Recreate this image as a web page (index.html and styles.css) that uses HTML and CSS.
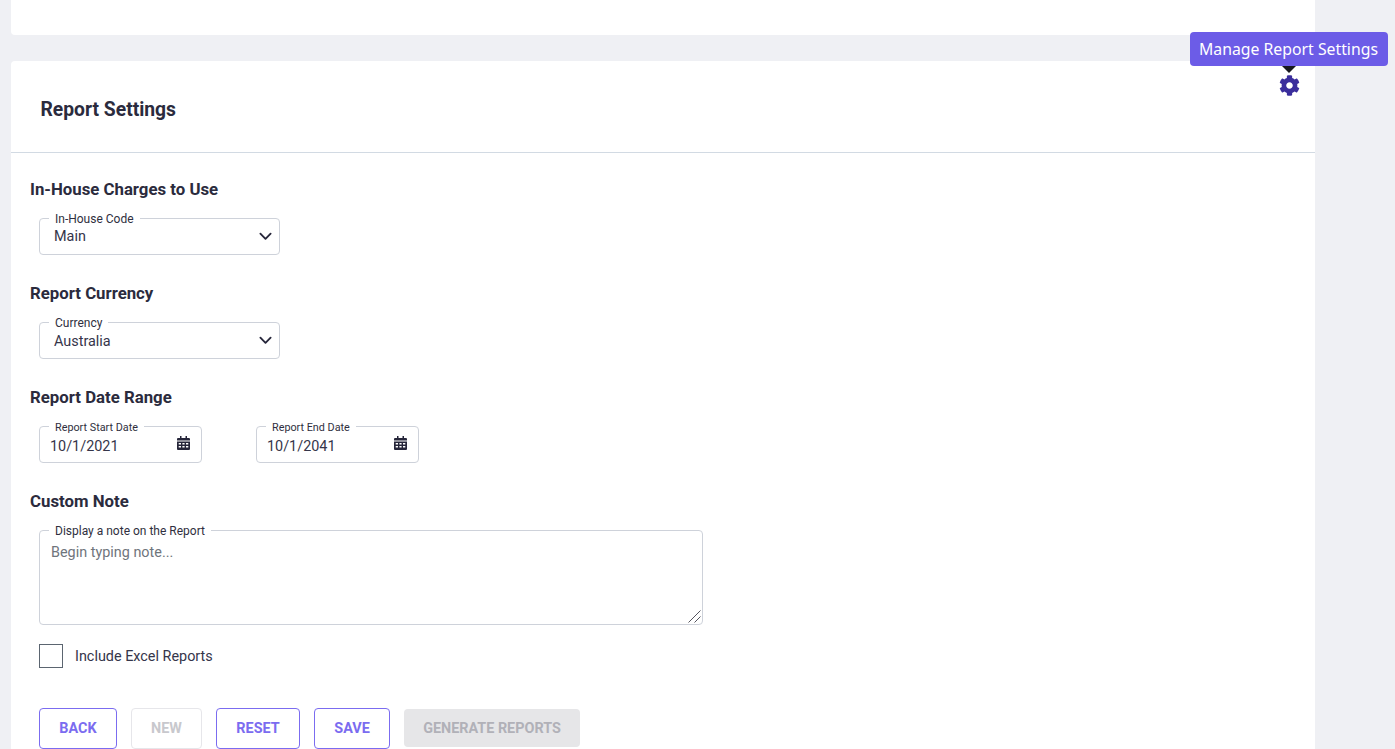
FILE: index.html
```html
<!DOCTYPE html>
<html lang="en">
<head>
<meta charset="utf-8">
<title>Report Settings</title>
<link rel="stylesheet" href="styles.css">
</head>
<body>
<main class="page">
  <div class="top-card"></div>
  <section class="card">
    <header class="card-header">
      <h1 class="title">Report Settings</h1>
      <div class="gear-wrap">
        <svg class="gear" viewBox="0 0 512 512" aria-hidden="true"><path fill="currentColor" d="M487.4 315.7l-42.6-24.6c4.3-23.2 4.3-47 0-70.2l42.6-24.6c4.9-2.8 7.1-8.6 5.5-14-11.1-35.6-30-67.8-54.7-94.6-3.8-4.1-10-5.1-14.8-2.3L380.8 110c-17.9-15.4-38.5-27.3-60.8-35.1V25.8c0-5.6-3.9-10.5-9.4-11.7-36.7-8.2-74.3-7.8-109.2 0-5.5 1.2-9.4 6.1-9.4 11.7V75c-22.2 7.9-42.8 19.8-60.8 35.1L88.7 85.5c-4.9-2.8-11-1.9-14.8 2.3-24.7 26.7-43.6 58.9-54.7 94.6-1.7 5.4.6 11.2 5.5 14L67.3 221c-4.3 23.2-4.3 47 0 70.2l-42.6 24.6c-4.9 2.8-7.1 8.6-5.5 14 11.1 35.6 30 67.8 54.7 94.6 3.8 4.1 10 5.1 14.8 2.3l42.6-24.6c17.9 15.4 38.5 27.3 60.8 35.1v49.2c0 5.6 3.9 10.5 9.4 11.7 36.7 8.2 74.3 7.8 109.2 0 5.5-1.2 9.4-6.1 9.4-11.7v-49.2c22.2-7.9 42.8-19.8 60.8-35.1l42.6 24.6c4.9 2.8 11 1.9 14.8-2.3 24.7-26.7 43.6-58.9 54.7-94.6 1.5-5.5-.7-11.3-5.6-14.1zM256 336c-44.1 0-80-35.9-80-80s35.9-80 80-80 80 35.9 80 80-35.9 80-80 80z"/></svg>
        <div class="tooltip">Manage Report Settings</div>
      </div>
    </header>
    <div class="card-body">
      <section class="group">
        <h2 class="group-title">In-House Charges to Use</h2>
        <div class="field select-field select-main">
          <span class="field-label">In-House Code</span>
          <span class="field-value">Main</span>
          <svg class="chevron" viewBox="0 0 14 9" aria-hidden="true"><path d="M1.5 1.5L7 7l5.5-5.5"/></svg>
        </div>
      </section>
      <section class="group">
        <h2 class="group-title">Report Currency</h2>
        <div class="field select-field">
          <span class="field-label">Currency</span>
          <span class="field-value">Australia</span>
          <svg class="chevron" viewBox="0 0 14 9" aria-hidden="true"><path d="M1.5 1.5L7 7l5.5-5.5"/></svg>
        </div>
      </section>
      <section class="group">
        <h2 class="group-title">Report Date Range</h2>
        <div class="date-row">
          <div class="field date-field">
            <span class="field-label date-label">Report Start Date</span>
            <span class="field-value">10/1/2021</span>
            <svg class="calendar" viewBox="0 0 13 14" aria-hidden="true"><path fill="currentColor" fill-rule="evenodd" d="M3 0h1.500v2h4V0H10v2h1.700C12.500 2 13 2.500 13 3.300V4.500H0V3.300C0 2.500 .5 2 1.300 2H3zM0 5.500h13v7.200c0 .8-.5 1.300-1.300 1.300H1.300C.5 14 0 13.500 0 12.700zM1.700 7v1.500h2.300V7zm3.700 0v1.500h2.200V7zm3.600 0v1.500h2.300V7zM1.700 10v1.500h2.300V10zm3.700 0v1.500h2.200V10zm3.600 0v1.500h2.300V10z"/></svg>
          </div>
          <div class="field date-field">
            <span class="field-label date-label">Report End Date</span>
            <span class="field-value">10/1/2041</span>
            <svg class="calendar" viewBox="0 0 13 14" aria-hidden="true"><path fill="currentColor" fill-rule="evenodd" d="M3 0h1.500v2h4V0H10v2h1.700C12.500 2 13 2.500 13 3.300V4.500H0V3.300C0 2.500 .5 2 1.300 2H3zM0 5.500h13v7.200c0 .8-.5 1.300-1.300 1.300H1.300C.5 14 0 13.500 0 12.700zM1.700 7v1.500h2.300V7zm3.700 0v1.500h2.200V7zm3.600 0v1.500h2.300V7zM1.700 10v1.500h2.300V10zm3.700 0v1.500h2.200V10zm3.600 0v1.500h2.300V10z"/></svg>
          </div>
        </div>
      </section>
      <section class="group group-note">
        <h2 class="group-title">Custom Note</h2>
        <div class="note-field">
          <span class="field-label note-label">Display a note on the Report</span>
          <textarea class="note" placeholder="Begin typing note..."></textarea>
          <svg class="grip" viewBox="0 0 13 13" aria-hidden="true"><path d="M0.5 12.500L12.500 0.500M6.500 12.500L12.500 6.500"/></svg>
        </div>
      </section>
      <label class="check-row">
        <span class="check-box"></span>
        <span class="check-label">Include Excel Reports</span>
      </label>
      <div class="actions">
        <button class="btn btn-back" type="button">BACK</button>
        <button class="btn btn-new" type="button" disabled>NEW</button>
        <button class="btn btn-reset" type="button">RESET</button>
        <button class="btn btn-save" type="button">SAVE</button>
        <button class="btn-generate" type="button" disabled>GENERATE REPORTS</button>
      </div>
    </div>
  </section>
</main>
</body>
</html>
```

FILE: styles.css
```css
* { box-sizing: border-box; }
html, body { margin: 0; height: 749px; overflow: hidden; }
body {
  background: #eff0f4;
  font-family: Roboto, "Liberation Sans", sans-serif;
  color: #2b2b3d;
}
.page { width: 1304px; margin-left: 11px; }
.top-card {
  height: 35px;
  background: #fff;
  border-radius: 0 0 4px 4px;
}
.card {
  margin-top: 26px;
  height: 700px;
  background: #fff;
  border-radius: 4px 4px 0 0;
}
.card-header {
  height: 92px;
  border-bottom: 1px solid #d2dae3;
  display: flex;
  align-items: center;
  justify-content: space-between;
  padding: 0 15px 0 29.500px;
}
.title {
  margin: 6px 0 0;
  font-size: 19.300px;
  line-height: 24px;
  font-weight: 700;
  color: #2b2b3d;
}
.gear-wrap {
  position: relative;
  width: 21px;
  height: 21px;
  margin-top: -43px;
}
.gear { display: block; width: 21px; height: 21px; color: #3a2d9c; }
.tooltip {
  position: absolute;
  top: -43px;
  left: -89.500px;
  width: 198px;
  height: 34px;
  background: #6c5ce7;
  border-radius: 4px;
  color: #fff;
  font-family: "Noto Sans", sans-serif;
  font-size: 15.800px;
  line-height: 34px;
  text-align: center;
  white-space: nowrap;
}
.tooltip::after {
  content: "";
  position: absolute;
  left: 92px;
  top: 34px;
  border-style: solid;
  border-width: 7px 7px 0;
  border-color: #17171f transparent transparent;
}
.card-body { padding: 0 0 0 19px; }
.group { height: 104px; padding-top: 25px; }
.group-title {
  margin: 0 0 18px;
  font-size: 16.800px;
  line-height: 22px;
  font-weight: 700;
  color: #2b2b3d;
}
.field {
  position: relative;
  height: 37px;
  margin-left: 9px;
  border: 1px solid #ced2da;
  border-radius: 4px;
  display: flex;
  align-items: center;
  justify-content: space-between;
}
.select-field { width: 241px; padding: 2px 7px 0 14px; }
.select-field .chevron { margin-top: -2px; }
.select-main { padding-top: 0; }
.select-main .chevron { margin-top: 0; }
.field-label {
  position: absolute;
  left: 9px;
  top: -7px;
  padding: 0 6px;
  background: #fff;
  font-size: 12px;
  line-height: 14px;
  color: #2f2f40;
  white-space: nowrap;
}
.date-label { font-size: 10.800px; top: -6px; }
.note-label { left: 10px; top: -6px; }
.field-value { font-size: 14.400px; line-height: 18px; color: #35354a; }
.chevron {
  width: 13px;
  height: 9px;
  fill: none;
  stroke: #26263a;
  stroke-width: 2;
  stroke-linecap: round;
  stroke-linejoin: round;
}
.date-row { display: flex; gap: 54px; margin-left: 9px; }
.date-field { width: 163px; margin-left: 0; padding: 4px 11px 0 10px; }
.calendar { width: 13px; height: 14px; color: #26263a; margin-top: -7px; }
.group-note { height: 179px; }
.note-field {
  position: relative;
  width: 664px;
  height: 95px;
  margin-left: 9px;
}
.note {
  display: block;
  width: 664px;
  height: 95px;
  border: 1px solid #ced2da;
  border-radius: 4px;
  padding: 13px 11px;
  font-family: Roboto, sans-serif;
  font-size: 14.400px;
  line-height: 18px;
  color: #35354a;
  resize: none;
  outline: none;
}
.note::placeholder { color: #6f757c; opacity: 1; }
.grip {
  position: absolute;
  right: 2px;
  bottom: 2px;
  width: 13px;
  height: 13px;
  fill: none;
  stroke: #55555f;
  stroke-width: 1;
  pointer-events: none;
}
.check-row {
  display: flex;
  align-items: center;
  gap: 12px;
  margin-left: 9px;
  height: 24px;
}
.check-box {
  width: 24px;
  height: 24px;
  border: 1px solid #5b6570;
  background: #fff;
}
.check-label { font-size: 14.400px; color: #35354a; }
.actions {
  display: flex;
  align-items: flex-start;
  gap: 14px;
  margin: 40px 0 0 9px;
}
.btn {
  height: 41px;
  border: 1px solid #7b6cf0;
  border-radius: 4px;
  background: #fff;
  color: #7b6cf0;
  font-family: Roboto, sans-serif;
  font-size: 14.400px;
  font-weight: 700;
  padding: 0;
}
.btn-back { width: 78px; }
.btn-new { width: 71px; border-color: #e6e6ea; color: #c8c8cd; }
.btn-reset { width: 84px; }
.btn-save { width: 76px; }
.btn-generate {
  width: 176px;
  height: 38px;
  margin-top: 1px;
  border: 0;
  border-radius: 4px;
  background: #e6e6e8;
  color: #b1b1b8;
  font-family: Roboto, sans-serif;
  font-size: 14.400px;
  font-weight: 700;
  padding: 0;
}
```
